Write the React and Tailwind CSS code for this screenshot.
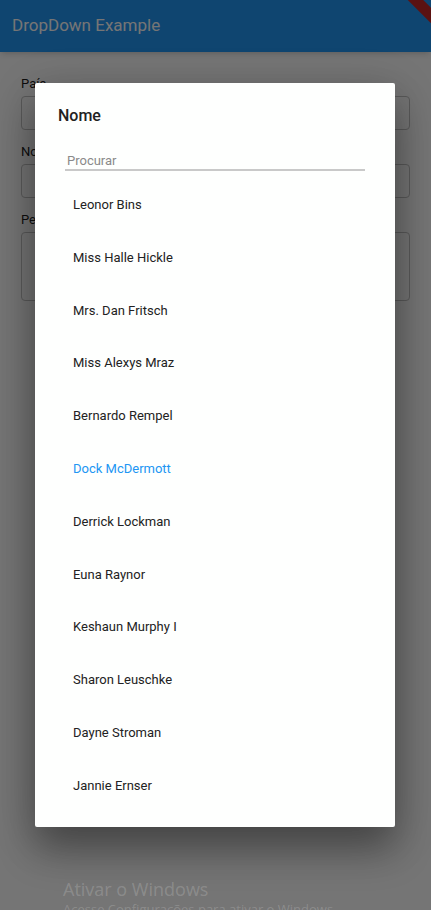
import React from 'react';

const names = [
  'Leonor Bins',
  'Miss Halle Hickle',
  'Mrs. Dan Fritsch',
  'Miss Alexys Mraz',
  'Bernardo Rempel',
  'Dock McDermott',
  'Derrick Lockman',
  'Euna Raynor',
  'Keshaun Murphy I',
  'Sharon Leuschke',
  'Dayne Stroman',
  'Jannie Ernser',
];

const selected = 'Dock McDermott';

const Field = ({ label, tall }) => (
  <div className="mb-[14px]">
    <div className="text-[13px] text-black/90 mb-[4px] leading-[16px]">{label}</div>
    <div className={`border border-[#c4c4c4] rounded-[4px] ${tall ? 'h-[69px]' : 'h-[34px]'}`} />
  </div>
);

export default function App() {
  return (
    <div className="relative w-[431px] h-[910px] overflow-hidden bg-white font-['Roboto',sans-serif]">
      {/* app bar */}
      <div className="relative h-[52px] bg-[#2196f3] flex items-center px-3 shadow-md">
        <span className="text-white text-[17px]">DropDown Example</span>
        <div className="absolute -right-[20px] top-[0px] w-[60px] h-[11px] bg-[#c62828] rotate-45" />
      </div>

      {/* form underneath */}
      <div className="px-[21px] pt-[24px]">
        <Field label="País" />
        <Field label="Nome" />
        <Field label="Pessoa" tall />
      </div>

      {/* modal barrier */}
      <div className="absolute inset-0 bg-black/[0.54]" />

      {/* dialog */}
      <div className="absolute left-[35px] top-[83px] w-[360px] h-[744px] bg-[#fefffe] rounded-[2px] shadow-[0_24px_38px_rgba(0,0,0,0.3),0_9px_46px_rgba(0,0,0,0.2)]">
        <div className="pl-[23px] pt-[23px] text-[16px] font-medium text-[#222] leading-[20px]">Nome</div>
        <div className="mx-[30px] mt-[27px] border-b-2 border-[#c9c9c9] text-[13px] leading-[16px]">
          <span className="pl-[2px] text-[#8a8a8a]">Procurar</span>
        </div>
        <div className="mt-[20px]">
          {names.map((n) => (
            <div
              key={n}
              className={`h-[52.8px] pl-[38px] pt-[6px] text-[13px] leading-[16px] ${n === selected ? 'text-[#2196f3]' : 'text-[#222]'}`}
            >
              {n}
            </div>
          ))}
        </div>
      </div>

      {/* windows watermark */}
      <div className="absolute left-[63px] top-[877px] text-white/[0.18] font-['Open_Sans',sans-serif]">
        <div className="text-[18px] leading-[24px]">Ativar o Windows</div>
        <div className="text-[13px] leading-[16px]">Acesse Configurações para ativar o Windows.</div>
      </div>
    </div>
  );
}
